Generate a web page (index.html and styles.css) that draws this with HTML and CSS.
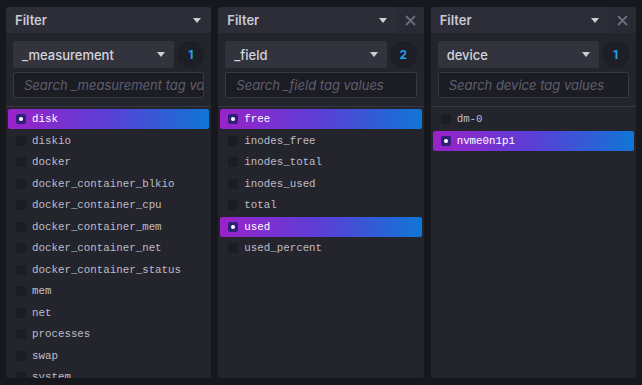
FILE: index.html
```html
<!DOCTYPE html>
<html>
<head>
<meta charset="utf-8">
<link rel="stylesheet" href="styles.css">
</head>
<body>
<div class="board">
  <section class="panel">
    <div class="head">
      <div class="title">Filter<span class="caret"></span></div>
    </div>
    <div class="controls">
      <div class="row">
        <div class="select">_measurement<span class="caret"></span></div>
        <div class="badge">1</div>
      </div>
      <div class="search">Search _measurement tag values</div>
    </div>
    <ul class="list">
      <li class="item on"><span class="box"></span>disk</li>
      <li class="item"><span class="box"></span>diskio</li>
      <li class="item"><span class="box"></span>docker</li>
      <li class="item"><span class="box"></span>docker_container_blkio</li>
      <li class="item"><span class="box"></span>docker_container_cpu</li>
      <li class="item"><span class="box"></span>docker_container_mem</li>
      <li class="item"><span class="box"></span>docker_container_net</li>
      <li class="item"><span class="box"></span>docker_container_status</li>
      <li class="item"><span class="box"></span>mem</li>
      <li class="item"><span class="box"></span>net</li>
      <li class="item"><span class="box"></span>processes</li>
      <li class="item"><span class="box"></span>swap</li>
      <li class="item"><span class="box"></span>system</li>
    </ul>
  </section>
  <section class="panel">
    <div class="head">
      <div class="title">Filter<span class="caret"></span></div>
      <div class="close"><svg width="11" height="11" viewBox="0 0 11 11"><path d="M1 1L10 10M10 1L1 10" stroke="currentColor" stroke-width="1.8" fill="none"/></svg></div>
    </div>
    <div class="controls">
      <div class="row">
        <div class="select">_field<span class="caret"></span></div>
        <div class="badge">2</div>
      </div>
      <div class="search">Search _field tag values</div>
    </div>
    <ul class="list">
      <li class="item on"><span class="box"></span>free</li>
      <li class="item"><span class="box"></span>inodes_free</li>
      <li class="item"><span class="box"></span>inodes_total</li>
      <li class="item"><span class="box"></span>inodes_used</li>
      <li class="item"><span class="box"></span>total</li>
      <li class="item on"><span class="box"></span>used</li>
      <li class="item"><span class="box"></span>used_percent</li>
    </ul>
  </section>
  <section class="panel">
    <div class="head">
      <div class="title">Filter<span class="caret"></span></div>
      <div class="close"><svg width="11" height="11" viewBox="0 0 11 11"><path d="M1 1L10 10M10 1L1 10" stroke="currentColor" stroke-width="1.8" fill="none"/></svg></div>
    </div>
    <div class="controls">
      <div class="row">
        <div class="select">device<span class="caret"></span></div>
        <div class="badge">1</div>
      </div>
      <div class="search">Search device tag values</div>
    </div>
    <ul class="list">
      <li class="item"><span class="box"></span>dm-0</li>
      <li class="item on"><span class="box"></span>nvme0n1p1</li>
    </ul>
  </section>
</div>
</body>
</html>
```
FILE: styles.css
```css
* { box-sizing: border-box; }
html, body { margin: 0; padding: 0; }
body {
  background: #17171e;
  width: 642px;
  height: 385px;
  overflow: hidden;
  font-family: Inter, "Noto Sans", sans-serif;
}
.board {
  display: flex;
  gap: 7px;
  padding: 7px 6px 7px 6px;
  height: 385px;
}
.panel {
  flex: 1;
  min-width: 0;
  background: #24242d;
  border-radius: 3px;
  display: flex;
  flex-direction: column;
  overflow: hidden;
}
.head {
  height: 26px;
  display: flex;
  flex-shrink: 0;
}
.title {
  flex: 1;
  background: #2d2d38;
  display: flex;
  align-items: center;
  justify-content: space-between;
  padding: 0 10px 0 9px;
  color: #c9c9d3;
  font-size: 13px;
  font-weight: 600;
}
.close {
  width: 27px;
  background: #2a2a34;
  color: #6c6c7c;
  display: flex;
  align-items: center;
  justify-content: center;
}
.caret {
  width: 0;
  height: 0;
  border-left: 4.5px solid transparent;
  border-right: 4.5px solid transparent;
  border-top: 5px solid #cfcfd8;
}
.controls {
  padding: 8px 7px 8px 7px;
  display: flex;
  flex-direction: column;
  gap: 4px;
  border-bottom: 1px solid #363642;
  flex-shrink: 0;
}
.row {
  display: flex;
  align-items: center;
  gap: 3px;
}
.select {
  flex: 1;
  height: 27px;
  background: #33333e;
  border-radius: 2px;
  display: flex;
  align-items: center;
  justify-content: space-between;
  padding: 0 9px 0 9px;
  color: #d4d4dd;
  font-size: 13px;
  font-weight: 500;
}
.badge {
  width: 27px;
  height: 27px;
  border-radius: 50%;
  background: #1e1e27;
  color: #1e9ff2;
  font-size: 12px;
  font-weight: 700;
  display: flex;
  align-items: center;
  justify-content: center;
}
.search {
  height: 26px;
  border: 1px solid #383845;
  background: #1c1c24;
  border-radius: 2px;
  padding: 0 10px;
  display: flex;
  align-items: center;
  color: #5f5f6f;
  font-size: 13px;
  font-style: italic;
  white-space: nowrap;
  overflow: hidden;
}
.list {
  list-style: none;
  margin: 0;
  padding: 2px 2px 0 2px;
  overflow: hidden;
}
.item {
  height: 20px;
  margin-bottom: 1.5px;
  display: flex;
  align-items: center;
  padding-left: 8px;
  border-radius: 2px;
  color: #bdbdc8;
  font-family: "Liberation Mono", "DejaVu Sans Mono", monospace;
  font-size: 10.8px;
  white-space: nowrap;
}
.box {
  width: 10px;
  height: 10px;
  border-radius: 2px;
  background: #1c1c26;
  margin-right: 6px;
  flex-shrink: 0;
  display: flex;
  align-items: center;
  justify-content: center;
}
.item.on {
  background: linear-gradient(90deg, #9a22c9 0%, #5a3fd6 50%, #0f76d6 100%);
  color: #ffffff;
}
.item.on .box {
  background: #2f2178;
}
.item.on .box::after {
  content: "";
  width: 4px;
  height: 4px;
  border-radius: 50%;
  background: #ffffff;
}
```
